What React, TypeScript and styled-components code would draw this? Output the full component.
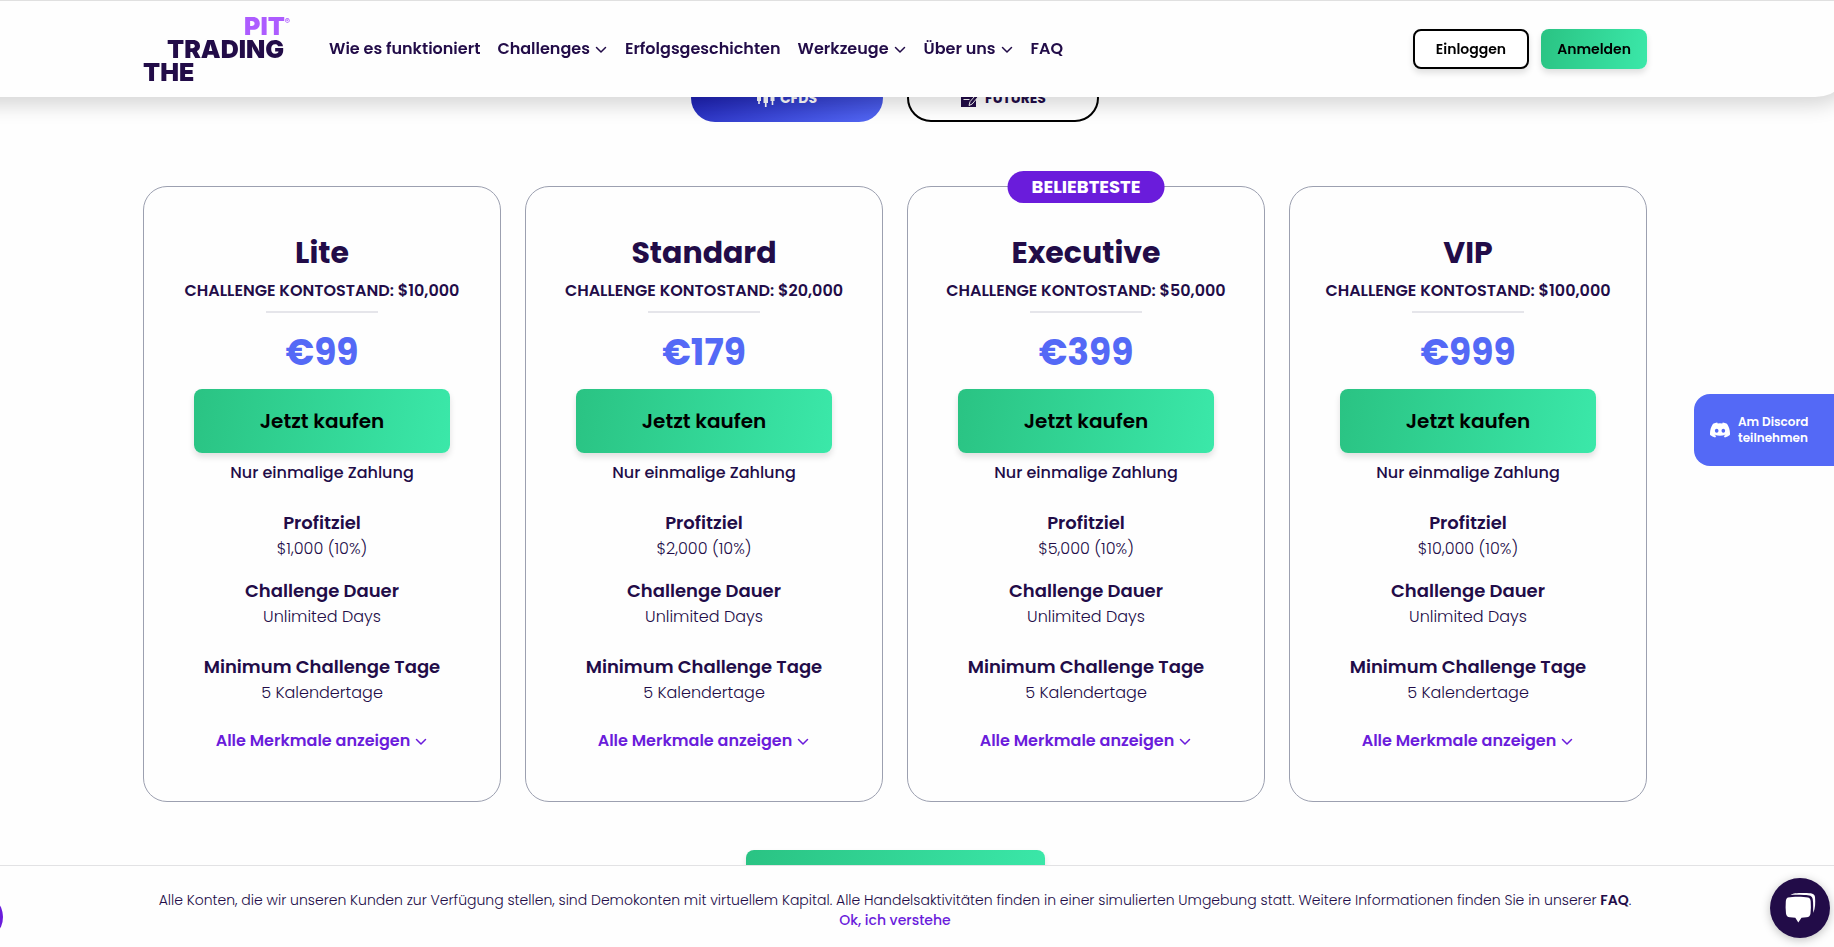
import React from "react";
import styled, { createGlobalStyle, css } from "styled-components";

const ink = "#220c48";
const violet = "#6a1cdb";
const indigo = "#5469f6";
const green = "linear-gradient(100deg, #2ac383 0%, #3be8a9 100%)";
const softShadow = "0 4px 6px rgba(0, 0, 0, 0.12)";

/* The page frame reaches past both window edges. */
const bleedLeft = "-65px";
const bleedRight = "-21px";

const GlobalStyle = createGlobalStyle`
  *, *::before, *::after { box-sizing: border-box; }
  html, body { margin: 0; overflow-x: hidden; }
  body {
    background: #fefefe;
    color: ${ink};
    font-family: Poppins, Inter, "Open Sans", sans-serif;
    font-size: 16px;
    line-height: 24px;
  }
  h2, h3, p, ul, dl, dt, dd { margin: 0; padding: 0; }
  ul { list-style: none; }
  a { color: inherit; text-decoration: none; }
  button { font: inherit; color: inherit; cursor: pointer; border: 0; padding: 0; background: none; }
`;

const container = css`
  max-width: 1536px;
  margin: 0 auto;
  padding: 0 16px;
`;

const Header = styled.header`
  position: fixed;
  z-index: 10;
  top: 0;
  left: ${bleedLeft};
  right: ${bleedRight};
  background: #fefefe;
  border-top: 1px solid #e0e0e0;
  border-radius: 0 0 40px 40px;
  box-shadow: 0 8px 20px rgba(0, 0, 0, 0.16);
`;

const HeaderInner = styled.div`
  ${container}
  display: flex;
  align-items: center;
  height: 96px;
`;

const Logo = styled.a`
  display: flex;
  flex-direction: column;
  width: 152px;
  margin-right: 34px;
  font-family: Inter, "Liberation Sans", sans-serif;
  font-size: 25px;
  font-weight: 900;
  line-height: 23px;
`;

const LogoLine = styled.span<{ $indent: number; $accent?: boolean }>`
  display: flex;
  padding-left: ${(p) => p.$indent}px;
  color: ${(p) => (p.$accent ? "#ad5cff" : ink)};
`;

const Registered = styled.span`
  font-size: 8px;
  line-height: 12px;
`;

const Nav = styled.nav`
  flex: 1;
`;

const NavList = styled.ul`
  display: flex;
  gap: 17px;
`;

const NavLink = styled.a`
  display: flex;
  align-items: center;
  gap: 4px;
  font-weight: 600;
  white-space: nowrap;
`;

const Actions = styled.div`
  display: flex;
  gap: 12px;
`;

const HeaderButton = styled.button<{ $primary?: boolean }>`
  height: 40px;
  padding: 0 ${(p) => (p.$primary ? 16 : 21)}px;
  border-radius: 8px;
  border: ${(p) => (p.$primary ? "0" : "2px solid #000")};
  background: ${(p) => (p.$primary ? green : "#fff")};
  box-shadow: ${softShadow};
  color: #000;
  font-size: 14px;
  font-weight: 600;
`;

const Main = styled.main`
  margin: 0 ${bleedRight} 0 ${bleedLeft};
  padding-top: 74px;
`;

const Content = styled.div`
  ${container}
  display: flex;
  flex-direction: column;
  align-items: center;
`;

const Markets = styled.div`
  display: flex;
  gap: 24px;
  margin-bottom: 64px;
`;

const MarketButton = styled.button<{ $active?: boolean }>`
  display: flex;
  align-items: center;
  justify-content: center;
  gap: 5px;
  width: 192px;
  height: 48px;
  border-radius: 24px;
  border: ${(p) => (p.$active ? "0" : "2px solid #000")};
  background: ${(p) => (p.$active ? "linear-gradient(165deg, #0c0a9a 0%, #5469f6 100%)" : "#fff")};
  color: ${(p) => (p.$active ? "#fff" : ink)};
  font-size: 14px;
  font-weight: 700;
`;

const Plans = styled.div`
  display: grid;
  grid-template-columns: repeat(4, 1fr);
  gap: 24px;
  width: 100%;
  margin-bottom: 48px;
`;

const Card = styled.article`
  position: relative;
  display: flex;
  flex-direction: column;
  align-items: center;
  padding: 48px 24px;
  border: 1px solid #9ca0b0;
  border-radius: 24px;
  text-align: center;
`;

const Badge = styled.span`
  position: absolute;
  top: -16px;
  left: 50%;
  transform: translateX(-50%);
  padding: 0 24px;
  border-radius: 16px;
  background: ${violet};
  color: #fff;
  font-size: 18px;
  font-weight: 700;
  line-height: 32px;
`;

const PlanName = styled.h2`
  font-size: 30px;
  font-weight: 700;
  line-height: 36px;
`;

const Balance = styled.p`
  margin-top: 8px;
  font-weight: 600;
  white-space: nowrap;
`;

const Divider = styled.div`
  width: 112px;
  height: 2px;
  margin: 8px 0 20px;
  background: #e5e5ea;
`;

const Price = styled.p`
  color: ${indigo};
  font-size: 36px;
  font-weight: 700;
  line-height: 40px;
`;

const BuyButton = styled.button`
  width: 83%;
  height: 64px;
  margin: 16px 0 8px;
  border-radius: 8px;
  background: ${green};
  box-shadow: ${softShadow};
  color: #000;
  font-size: 20px;
  font-weight: 600;
`;

const Note = styled.p`
  font-weight: 500;
`;

const Features = styled.dl`
  margin-bottom: 24px;
`;

const Feature = styled.div<{ $tight?: boolean }>`
  margin-top: ${(p) => (p.$tight ? 16 : 24)}px;
`;

const Term = styled.dt`
  font-size: 18px;
  font-weight: 600;
  line-height: 28px;
`;

const Detail = styled.dd`
  font-weight: 300;
`;

const MoreButton = styled.button`
  display: flex;
  align-items: center;
  gap: 4px;
  color: ${violet};
  font-weight: 600;
`;

const CompareButton = styled.button`
  width: 299px;
  height: 64px;
  border-radius: 8px;
  background: ${green};
  box-shadow: ${softShadow};
`;

const Notice = styled.footer`
  position: fixed;
  z-index: 5;
  bottom: 0;
  left: ${bleedLeft};
  right: ${bleedRight};
  display: flex;
  flex-direction: column;
  align-items: center;
  padding: 24px 16px 17px;
  border-top: 1px solid #e2e2e4;
  background: #fefefe;
  font-size: 14px;
  font-weight: 300;
  line-height: 20px;
  text-align: center;
`;

const NoticeLink = styled.a`
  font-weight: 600;
`;

const AcceptButton = styled.button`
  color: ${violet};
  font-weight: 500;
`;

const DiscordLink = styled.a`
  position: fixed;
  z-index: 8;
  top: 394px;
  right: ${bleedRight};
  display: flex;
  align-items: center;
  gap: 8px;
  width: 161px;
  height: 72px;
  padding-left: 16px;
  border-radius: 16px 0 0 16px;
  background: ${indigo};
  color: #fff;
  font-size: 12px;
  font-weight: 600;
  line-height: 16px;
`;

const ChatButton = styled.button`
  position: fixed;
  z-index: 12;
  right: 4px;
  bottom: 9px;
  display: grid;
  place-items: center;
  width: 60px;
  height: 60px;
  border-radius: 50%;
  background: ${ink};
  box-shadow: 0 2px 10px rgba(0, 0, 0, 0.25);
`;

const AccessButton = styled.button`
  position: fixed;
  z-index: 12;
  left: -45px;
  bottom: 6px;
  width: 48px;
  height: 48px;
  border-radius: 50%;
  background: ${violet};
`;

const Chevron = () => (
  <svg width="14" height="14" viewBox="0 0 14 14" fill="none" stroke="currentColor" strokeWidth="1.5" strokeLinecap="round" strokeLinejoin="round" aria-hidden="true">
    <path d="M2.500 5.500 7 10l4.500-4.500" />
  </svg>
);

const CandlesIcon = () => (
  <svg width="18" height="20" viewBox="0 0 18 20" fill="currentColor" aria-hidden="true">
    <path d="M0 4h4v9H2.800v3H1.200v-3H0zM6.500 2h4.500v13H9.600v4H7.900v-4H6.500zM13.500 5h4v8h-1.200v4h-1.600v-4h-1.200z" />
  </svg>
);

const SheetPenIcon = () => (
  <svg width="20" height="20" viewBox="0 0 20 20" aria-hidden="true">
    <path fill={ink} d="M1 2h15v17H1z" />
    <path fill="#fff" d="M3.500 8h8v1h-8zM3.500 11h6v1h-6z" />
    <path fill={ink} stroke="#fff" strokeWidth="1" d="m9 17.500 1-3.800 7.500-8.700 2.200 2-7.500 9z" />
  </svg>
);

const DiscordIcon = () => (
  <svg width="20" height="20" viewBox="0 0 24 24" fill="currentColor" aria-hidden="true">
    <path d="M20.317 4.370a19.791 19.791 0 0 0-4.885-1.515.074.074 0 0 0-.079.037c-.210.375-.444.864-.608 1.250a18.270 18.270 0 0 0-5.487 0 12.640 12.640 0 0 0-.617-1.250.077.077 0 0 0-.079-.037A19.736 19.736 0 0 0 3.677 4.370a.070.070 0 0 0-.032.027C.533 9.046-.320 13.580.099 18.058a.082.082 0 0 0 .031.056 19.900 19.900 0 0 0 5.993 3.030.078.078 0 0 0 .084-.028c.462-.630.874-1.295 1.226-1.994a.076.076 0 0 0-.041-.106 13.107 13.107 0 0 1-1.872-.892.077.077 0 0 1-.008-.128c.126-.094.252-.192.372-.291a.074.074 0 0 1 .078-.010c3.928 1.793 8.180 1.793 12.061 0a.074.074 0 0 1 .079.009c.120.099.246.198.373.292a.077.077 0 0 1-.007.128 12.299 12.299 0 0 1-1.873.891.077.077 0 0 0-.041.107c.360.698.772 1.363 1.225 1.993a.076.076 0 0 0 .084.029 19.839 19.839 0 0 0 6.002-3.030.077.077 0 0 0 .032-.055c.500-5.177-.838-9.674-3.549-13.660a.061.061 0 0 0-.031-.028zM8.020 15.331c-1.183 0-2.157-1.086-2.157-2.419s.955-2.419 2.157-2.419c1.210 0 2.176 1.095 2.157 2.419 0 1.333-.956 2.419-2.157 2.419zm7.975 0c-1.183 0-2.157-1.086-2.157-2.419s.955-2.419 2.157-2.419c1.210 0 2.176 1.095 2.157 2.419 0 1.333-.946 2.419-2.157 2.419z" />
  </svg>
);

const ChatIcon = () => (
  <svg width="32" height="32" viewBox="0 0 32 32" aria-hidden="true">
    <path fill="#fff" d="M6.500 3C9 1.200 12 1 20 1c8 0 10.500.500 11 4 .500 6 .300 11-1.700 16-.3-5 .2-9-.6-14C28 3.800 26 3.200 20 3 14 2.800 10 2.800 6.500 3z" />
    <path fill="#fff" d="M4 5.500c5-1 15-1 20 0 2 .5 2.500 2 2.700 4 .3 4 .3 8-.2 12-.3 2.500-1.500 3.500-4 3.800l-5 .4-3.200 4.800-3-4.800-5.300-.4c-2.500-.3-3.700-1.300-4-3.800-.5-4-.5-8-.2-12 .2-2 .7-3.500 2.200-4z" />
  </svg>
);

const navItems = [
  { label: "Wie es funktioniert" },
  { label: "Challenges", menu: true },
  { label: "Erfolgsgeschichten" },
  { label: "Werkzeuge", menu: true },
  { label: "Über uns", menu: true },
  { label: "FAQ" },
];

const plans = [
  { name: "Lite", balance: "$10,000", price: "€99", target: "$1,000 (10%)" },
  { name: "Standard", balance: "$20,000", price: "€179", target: "$2,000 (10%)" },
  { name: "Executive", balance: "$50,000", price: "€399", target: "$5,000 (10%)", popular: true },
  { name: "VIP", balance: "$100,000", price: "€999", target: "$10,000 (10%)" },
];

export default function App() {
  return (
    <>
      <GlobalStyle />
      <Header>
        <HeaderInner>
          <Logo href="#" aria-label="The Trading Pit">
            <LogoLine $indent={101} $accent>
              PIT<Registered>®</Registered>
            </LogoLine>
            <LogoLine $indent={24}>TRADING</LogoLine>
            <LogoLine $indent={0}>THE</LogoLine>
          </Logo>
          <Nav>
            <NavList>
              {navItems.map((item) => (
                <li key={item.label}>
                  <NavLink href="#">
                    {item.label}
                    {item.menu && <Chevron />}
                  </NavLink>
                </li>
              ))}
            </NavList>
          </Nav>
          <Actions>
            <HeaderButton>Einloggen</HeaderButton>
            <HeaderButton $primary>Anmelden</HeaderButton>
          </Actions>
        </HeaderInner>
      </Header>

      <Main>
        <Content>
          <Markets>
            <MarketButton $active>
              <CandlesIcon />
              CFDS
            </MarketButton>
            <MarketButton>
              <SheetPenIcon />
              FUTURES
            </MarketButton>
          </Markets>
          <Plans>
            {plans.map((plan) => (
              <Card key={plan.name}>
                {plan.popular && <Badge>BELIEBTESTE</Badge>}
                <PlanName>{plan.name}</PlanName>
                <Balance>CHALLENGE KONTOSTAND: {plan.balance}</Balance>
                <Divider />
                <Price>{plan.price}</Price>
                <BuyButton>Jetzt kaufen</BuyButton>
                <Note>Nur einmalige Zahlung</Note>
                <Features>
                  <Feature>
                    <Term>Profitziel</Term>
                    <Detail>{plan.target}</Detail>
                  </Feature>
                  <Feature $tight>
                    <Term>Challenge Dauer</Term>
                    <Detail>Unlimited Days</Detail>
                  </Feature>
                  <Feature>
                    <Term>Minimum Challenge Tage</Term>
                    <Detail>5 Kalendertage</Detail>
                  </Feature>
                </Features>
                <MoreButton>
                  Alle Merkmale anzeigen
                  <Chevron />
                </MoreButton>
              </Card>
            ))}
          </Plans>
          <CompareButton aria-label="Challenges vergleichen" />
        </Content>
      </Main>

      <DiscordLink href="#">
        <DiscordIcon />
        <span>
          Am Discord
          <br />
          teilnehmen
        </span>
      </DiscordLink>

      <Notice>
        <p>
          Alle Konten, die wir unseren Kunden zur Verfügung stellen, sind Demokonten mit virtuellem Kapital. Alle
          Handelsaktivitäten finden in einer simulierten Umgebung statt. Weitere Informationen finden Sie in unserer{" "}
          <NoticeLink href="#">FAQ</NoticeLink>.
        </p>
        <AcceptButton>Ok, ich verstehe</AcceptButton>
      </Notice>

      <AccessButton aria-label="Einstellungen" />
      <ChatButton aria-label="Chat">
        <ChatIcon />
      </ChatButton>
    </>
  );
}
